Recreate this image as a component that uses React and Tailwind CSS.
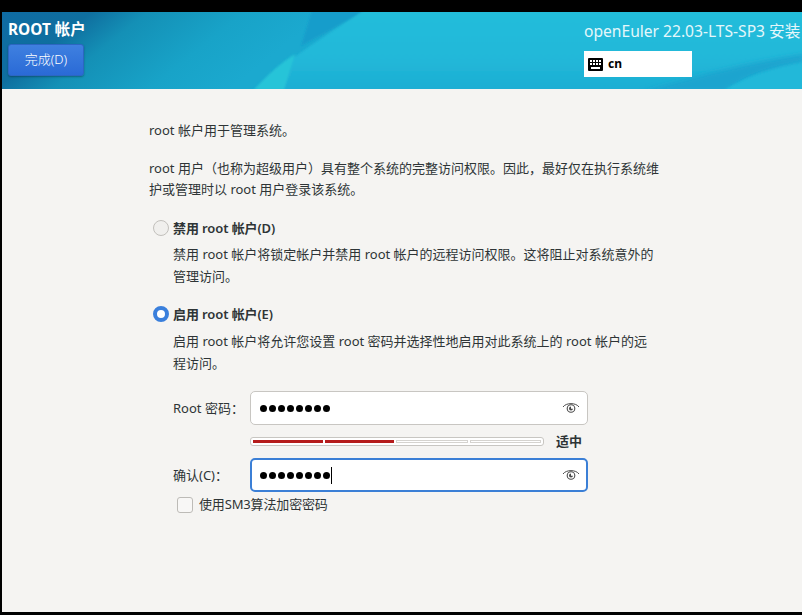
import React from "react";

const font = { fontFamily: '"Noto Sans", "Noto Sans CJK SC", sans-serif' };

const HeaderArt = () => (
  <svg className="absolute inset-0 w-full h-full" viewBox="0 0 800 77" preserveAspectRatio="none">
    <defs>
      <linearGradient id="base" x1="0" y1="0" x2="1" y2="0.12">
        <stop offset="0" stopColor="#0f6ba3" />
        <stop offset="0.11" stopColor="#0f6f9f" />
        <stop offset="0.18" stopColor="#1490b6" />
        <stop offset="0.3" stopColor="#18a3c8" />
        <stop offset="0.4" stopColor="#1ba9cf" />
        <stop offset="1" stopColor="#1ca9d0" />
      </linearGradient>
      <linearGradient id="wedge" x1="0" y1="0" x2="0" y2="1">
        <stop offset="0" stopColor="#23bdda" />
        <stop offset="0.6" stopColor="#21b8d9" />
        <stop offset="1" stopColor="#1eaed3" />
      </linearGradient>
      <filter id="soft">
        <feGaussianBlur stdDeviation="0.8" />
      </filter>
      <filter id="softer">
        <feGaussianBlur stdDeviation="2.5" />
      </filter>
    </defs>
    <rect width="800" height="77" fill="url(#base)" />
    <g filter="url(#soft)">
      <path d="M250 78 C285 48 320 26 362 -2 L802 -2 L802 78 Z" fill="url(#wedge)" />
      <path d="M299 34 L310 -2 L362 -2 C340 13 318 23 299 34 Z" fill="#189dcb" />
      <path d="M252 78 C266 62 280 50 293 42 L282 78 Z" fill="#27c4d8" />
    </g>
    <path d="M640 80 C700 62 750 50 802 42 L802 50 C770 56 745 64 722 80 Z" fill="#1ba4cf" filter="url(#softer)" />
    <path d="M722 78 C745 64 770 56 802 51 L802 78 Z" fill="#21b8d9" filter="url(#soft)" />
  </svg>
);

const Eye = () => (
  <svg width="18" height="14" viewBox="0 0 18 14" fill="none" stroke="#4a4a4a" className="shrink-0">
    <path d="M1 6 C4 1.5 14 1.5 17 6" strokeWidth="1" />
    <circle cx="9" cy="7.5" r="3.8" strokeWidth="1.1" />
    <path d="M9 5.6 A2 2 0 1 0 11 7.8 L9 7.8 Z" fill="#4a4a4a" stroke="none" />
  </svg>
);

const Keyboard = () => (
  <svg width="15" height="13" viewBox="0 0 15 13" className="shrink-0">
    <rect width="15" height="13" rx="1" fill="#000" />
    <g fill="#fff">
      <rect x="2" y="2" width="2" height="2" />
      <rect x="5" y="2" width="2" height="2" />
      <rect x="8" y="2" width="2" height="2" />
      <rect x="11" y="2" width="2" height="2" />
      <rect x="2" y="5" width="2" height="2" />
      <rect x="5" y="5" width="2" height="2" />
      <rect x="8" y="5" width="2" height="2" />
      <rect x="11" y="5" width="2" height="2" />
      <rect x="3" y="9" width="9" height="2" />
    </g>
  </svg>
);

const Dots = () => (
  <div className="flex gap-[2px]">
    {[0, 1, 2, 3, 4, 5, 6, 7].map((i) => (
      <span key={i} className="block w-[7px] h-[7px] rounded-full bg-black" />
    ))}
  </div>
);

export default function App() {
  return (
    <div className="w-[802px] h-[615px] bg-black pt-[12px] pl-[2px] pb-[3px] overflow-hidden" style={font}>
      <div className="h-full flex flex-col bg-[#f5f4f2]">
        <header className="relative h-[77px] shrink-0 text-white">
          <HeaderArt />
          <div className="relative flex justify-between h-full">
            <div className="pl-[6px] pt-[8px]">
              <h1 className="text-[15.4px] leading-[20px] font-bold whitespace-nowrap">ROOT 帐户</h1>
              <button className="mt-[4px] w-[76px] h-[32px] rounded-[3px] bg-gradient-to-b from-[#3f80e0] to-[#2a6ad6] border border-[#2c66c2] shadow-[0_1px_2px_rgba(0,0,0,0.3)] text-[13px] text-white font-light">
                完成(D)
              </button>
            </div>
            <div className="w-[218px] pt-[9px]">
              <div className="text-[15.6px] leading-[20px] whitespace-nowrap text-[#e4f7fb]">openEuler 22.03-LTS-SP3 安装</div>
              <div className="mt-[10px] w-[108px] h-[26px] bg-white flex items-center gap-[5px] pl-[4px] text-black text-[12px] font-bold">
                <Keyboard />
                <span>cn</span>
              </div>
            </div>
          </div>
        </header>

        <main className="flex-1 pl-[147px] pt-[31px] text-[13px] leading-[21px] text-[#2e3436]">
          <p>root 帐户用于管理系统。</p>
          <p className="mt-[17px] w-[520px]">root 用户（也称为超级用户）具有整个系统的完整访问权限。因此，最好仅在执行系统维护或管理时以 root 用户登录该系统。</p>

          <div className="mt-[18px] ml-[4px] flex items-center gap-[4px] h-[20px]">
            <span className="w-[16px] h-[16px] rounded-full border border-[#c2c0bc] bg-[#f0efed]" />
            <span className="font-semibold tracking-[-0.1px]">禁用 root 帐户(D)</span>
          </div>
          <p className="mt-[5px] ml-[24px] w-[482px] leading-[22px]">禁用 root 帐户将锁定帐户并禁用 root 帐户的远程访问权限。这将阻止对系统意外的管理访问。</p>

          <div className="mt-[17px] ml-[4px] flex items-center gap-[4px] h-[20px]">
            <span className="w-[16px] h-[16px] rounded-full bg-white border-[4px] border-[#3a7fdc]" />
            <span className="font-semibold tracking-[-0.1px]">启用 root 帐户(E)</span>
          </div>
          <p className="mt-[6px] ml-[24px] w-[482px] leading-[22px]">启用 root 帐户将允许您设置 root 密码并选择性地启用对此系统上的 root 帐户的远程访问。</p>

          <div className="mt-[17px] ml-[24px] flex items-center">
            <label className="w-[77px]">Root 密码：</label>
            <div className="w-[338px] h-[34px] rounded-[5px] bg-white border border-[#c8c6c2] flex items-center justify-between pl-[9px] pr-[7px]">
              <Dots />
              <Eye />
            </div>
          </div>
          <div className="mt-[8px] ml-[101px] flex items-center">
            <div className="w-[294px] h-[9px] rounded-[3px] bg-white border border-[#c8c6c2] flex gap-[2px] items-center px-[2px]">
              <span className="flex-1 h-[3px] bg-[#b51c1c]" />
              <span className="flex-1 h-[3px] bg-[#b51c1c]" />
              <span className="flex-1 h-[3px] border border-[#d5d3cf]" />
              <span className="flex-1 h-[3px] border border-[#d5d3cf]" />
            </div>
            <span className="ml-[12px] font-semibold leading-[16px]">适中</span>
          </div>
          <div className="mt-[9px] ml-[24px] flex items-center">
            <label className="w-[77px]">确认(C)：</label>
            <div className="w-[338px] h-[34px] rounded-[5px] bg-white border-2 border-[#3b7fd6] flex items-center justify-between pl-[8px] pr-[6px]">
              <div className="flex items-center">
                <Dots />
                <span className="ml-[1px] w-[1px] h-[17px] bg-black" />
              </div>
              <Eye />
            </div>
          </div>
          <div className="mt-[2px] ml-[28px] flex items-center gap-[6px]">
            <span className="w-[16px] h-[16px] rounded-[3px] bg-[#f8f7f6] border border-[#bdbbb7]" />
            <span className="tracking-[-0.15px]">使用SM3算法加密密码</span>
          </div>
        </main>
      </div>
    </div>
  );
}
